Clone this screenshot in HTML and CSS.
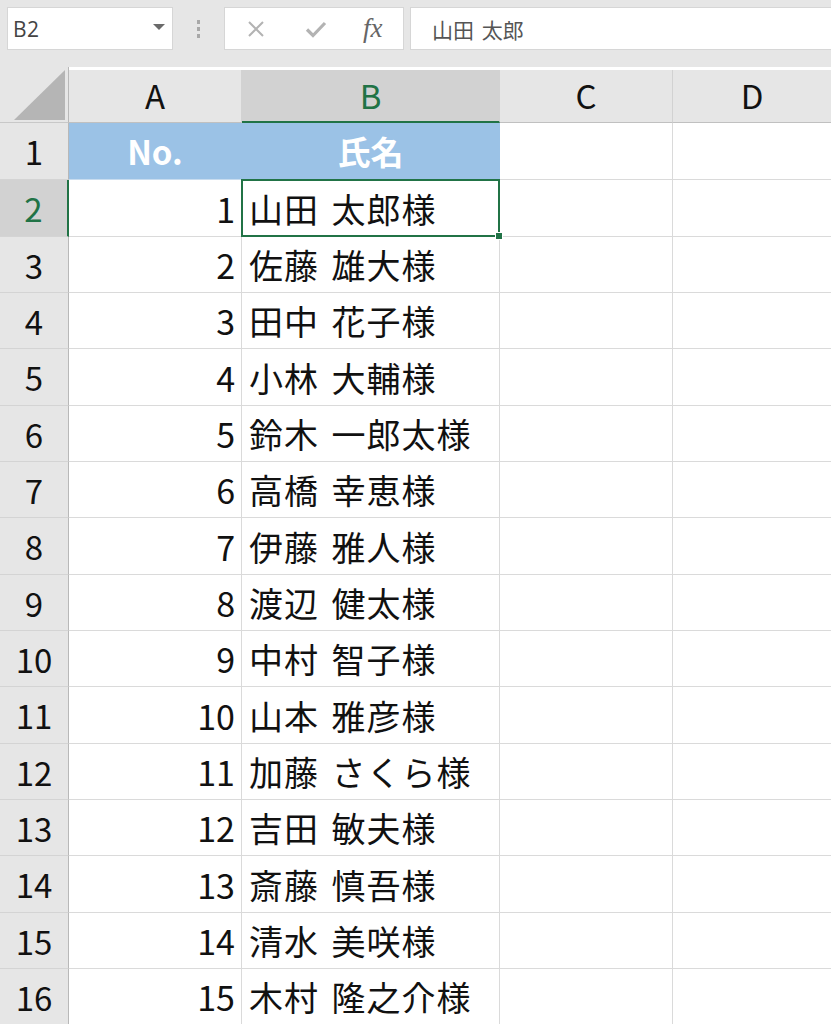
FILE: index.html
```html
<!DOCTYPE html>
<html lang="ja">
<head>
<meta charset="utf-8">
<title>Sheet</title>
<link rel="stylesheet" href="styles.css">
</head>
<body>
<div class="toolbar">
  <div class="namebox">
    <span class="nb-text">B2</span>
    <svg class="nb-drop" width="12" height="6" viewBox="0 0 12 6"><path d="M0 0H12L6 6Z" fill="#6a6a6a"/></svg>
  </div>
  <div class="grip">
    <span></span><span></span><span></span>
  </div>
  <div class="fxbox">
    <svg class="ic-x" width="18" height="18" viewBox="0 0 18 18"><path d="M2 2L16 16M16 2L2 16" stroke="#b3b3b3" stroke-width="2" fill="none"/></svg>
    <svg class="ic-check" width="22" height="18" viewBox="0 0 22 18"><path d="M2 9.5L8 15.5L20 3" stroke="#b3b3b3" stroke-width="3.2" fill="none"/></svg>
    <span class="ic-fx">fx</span>
  </div>
  <div class="formula">山田 太郎</div>
</div>

<div class="sheet">
  <div class="corner"><svg width="52" height="50" viewBox="0 0 52 50"><path d="M0 50L51 0V50Z" fill="#b5b5b5"/></svg></div>
  <div class="colhead">A</div>
  <div class="colhead sel">B</div>
  <div class="colhead">C</div>
  <div class="colhead last">D</div>

  <div class="rowhead">1</div>
  <div class="cell hdr">No.</div>
  <div class="cell hdr">氏名</div>
  <div class="cell"></div>
  <div class="cell last"></div>

  <div class="rowhead sel">2</div>
  <div class="cell num">1</div>
  <div class="cell name active">山田 太郎様</div>
  <div class="cell"></div>
  <div class="cell last"></div>

  <div class="rowhead">3</div>
  <div class="cell num">2</div>
  <div class="cell name">佐藤 雄大様</div>
  <div class="cell"></div>
  <div class="cell last"></div>

  <div class="rowhead">4</div>
  <div class="cell num">3</div>
  <div class="cell name">田中 花子様</div>
  <div class="cell"></div>
  <div class="cell last"></div>

  <div class="rowhead">5</div>
  <div class="cell num">4</div>
  <div class="cell name">小林 大輔様</div>
  <div class="cell"></div>
  <div class="cell last"></div>

  <div class="rowhead">6</div>
  <div class="cell num">5</div>
  <div class="cell name">鈴木 一郎太様</div>
  <div class="cell"></div>
  <div class="cell last"></div>

  <div class="rowhead">7</div>
  <div class="cell num">6</div>
  <div class="cell name">高橋 幸恵様</div>
  <div class="cell"></div>
  <div class="cell last"></div>

  <div class="rowhead">8</div>
  <div class="cell num">7</div>
  <div class="cell name">伊藤 雅人様</div>
  <div class="cell"></div>
  <div class="cell last"></div>

  <div class="rowhead">9</div>
  <div class="cell num">8</div>
  <div class="cell name">渡辺 健太様</div>
  <div class="cell"></div>
  <div class="cell last"></div>

  <div class="rowhead">10</div>
  <div class="cell num">9</div>
  <div class="cell name">中村 智子様</div>
  <div class="cell"></div>
  <div class="cell last"></div>

  <div class="rowhead">11</div>
  <div class="cell num">10</div>
  <div class="cell name">山本 雅彦様</div>
  <div class="cell"></div>
  <div class="cell last"></div>

  <div class="rowhead">12</div>
  <div class="cell num">11</div>
  <div class="cell name">加藤 さくら様</div>
  <div class="cell"></div>
  <div class="cell last"></div>

  <div class="rowhead">13</div>
  <div class="cell num">12</div>
  <div class="cell name">吉田 敏夫様</div>
  <div class="cell"></div>
  <div class="cell last"></div>

  <div class="rowhead">14</div>
  <div class="cell num">13</div>
  <div class="cell name">斎藤 慎吾様</div>
  <div class="cell"></div>
  <div class="cell last"></div>

  <div class="rowhead">15</div>
  <div class="cell num">14</div>
  <div class="cell name">清水 美咲様</div>
  <div class="cell"></div>
  <div class="cell last"></div>

  <div class="rowhead">16</div>
  <div class="cell num">15</div>
  <div class="cell name">木村 隆之介様</div>
  <div class="cell"></div>
  <div class="cell last"></div>
</div>
</body>
</html>
```
FILE: styles.css
```css
html, body {
  margin: 0;
  padding: 0;
  background: #e6e6e6;
  overflow: hidden;
}
body {
  width: 831px;
  height: 1024px;
  font-family: "Noto Sans CJK JP", "Noto Sans", sans-serif;
}

/* formula bar */
.toolbar {
  height: 67px;
  display: flex;
  align-items: flex-start;
  padding-top: 7px;
  box-sizing: border-box;
  background: #e6e6e6;
}
.namebox {
  margin-left: 7px;
  width: 166px;
  height: 43px;
  box-sizing: border-box;
  background: #fff;
  border: 1px solid #d6d6d6;
  display: flex;
  align-items: center;
  justify-content: space-between;
  padding: 0 7px 0 5px;
}
.nb-text {
  font-family: "Open Sans", "Noto Sans", sans-serif;
  font-size: 21px;
  color: #444;
  letter-spacing: 0.5px;
}
.nb-drop {
  margin-top: -4px;
}
.grip {
  width: 51px;
  height: 43px;
  display: flex;
  flex-direction: column;
  align-items: center;
  justify-content: center;
  gap: 3px;
}
.grip span {
  width: 3px;
  height: 4px;
  background: #a8a8a8;
}
.fxbox {
  width: 180px;
  height: 43px;
  box-sizing: border-box;
  background: #fff;
  border: 1px solid #d6d6d6;
  display: flex;
  align-items: center;
  padding-left: 22px;
}
.ic-check {
  margin-left: 40px;
}
.ic-fx {
  margin-left: 36px;
  font-family: "Liberation Serif", "DejaVu Serif", serif;
  font-style: italic;
  font-size: 27px;
  color: #666;
  margin-top: 0;
}
.formula {
  margin-left: 6px;
  flex: 1;
  height: 43px;
  box-sizing: border-box;
  background: #fff;
  border: 1px solid #d6d6d6;
  border-right: none;
  display: flex;
  align-items: center;
  padding-left: 21px;
  font-size: 21px;
  color: #555;
  word-spacing: 3px;
}

/* sheet grid */
.sheet {
  display: grid;
  grid-template-columns: 69px 173px 258px 173px 1fr;
  grid-template-rows: 56px 57px 57px 56px 56px 57px 56px 56px 57px 56px 56px 57px 56px 56px 57px 56px 56px;
  background: #fff;
}
.corner {
  background: #e6e6e6;
  border-right: 1px solid #b8b8b8;
  border-bottom: 1px solid #c8c8c8;
  display: flex;
  align-items: flex-end;
  justify-content: flex-end;
  padding: 0 2px 2px 0;
}
.colhead {
  background: #e6e6e6;
  border-right: 1px solid #d2d2d2;
  border-bottom: 1px solid #c0c0c0;
  display: flex;
  align-items: center;
  justify-content: center;
  font-size: 33px;
  color: #111;
  margin-top: 3px;
  padding-bottom: 2px;
}
.colhead.sel {
  background: #d2d2d2;
  color: #217346;
  border-bottom: 2px solid #217346;
}
.colhead.last {
  border-right: none;
}
.rowhead {
  background: #e6e6e6;
  border-right: 1px solid #b8b8b8;
  border-bottom: 1px solid #d4d4d4;
  display: flex;
  align-items: center;
  justify-content: center;
  font-size: 33px;
  color: #111;
}
.rowhead.sel {
  background: #d2d2d2;
  color: #217346;
  border-right: 2px solid #217346;
}
.cell {
  border-right: 1px solid #dadada;
  border-bottom: 1px solid #dadada;
  display: flex;
  align-items: center;
  font-size: 34px;
  color: #111;
  white-space: nowrap;
  min-width: 0;
}
.cell.last {
  border-right: none;
}
.cell.hdr {
  background: #9bc2e6;
  border-right-color: #9bc2e6;
  border-bottom-color: #c8dcef;
  color: #fff;
  font-weight: 700;
  justify-content: center;
  font-size: 33px;
}
.cell.num {
  justify-content: flex-end;
  padding-right: 6px;
}
.cell.name {
  padding-left: 7px;
  letter-spacing: 1px;
  word-spacing: 4px;
}
.cell.active {
  position: relative;
}
.cell.active::before {
  content: "";
  position: absolute;
  left: -1px;
  top: -1px;
  right: -1px;
  bottom: -1px;
  border: 2px solid #217346;
}
.cell.active::after {
  content: "";
  position: absolute;
  right: -4px;
  bottom: -4px;
  width: 6px;
  height: 6px;
  background: #217346;
  border: 1px solid #fff;
}
```
